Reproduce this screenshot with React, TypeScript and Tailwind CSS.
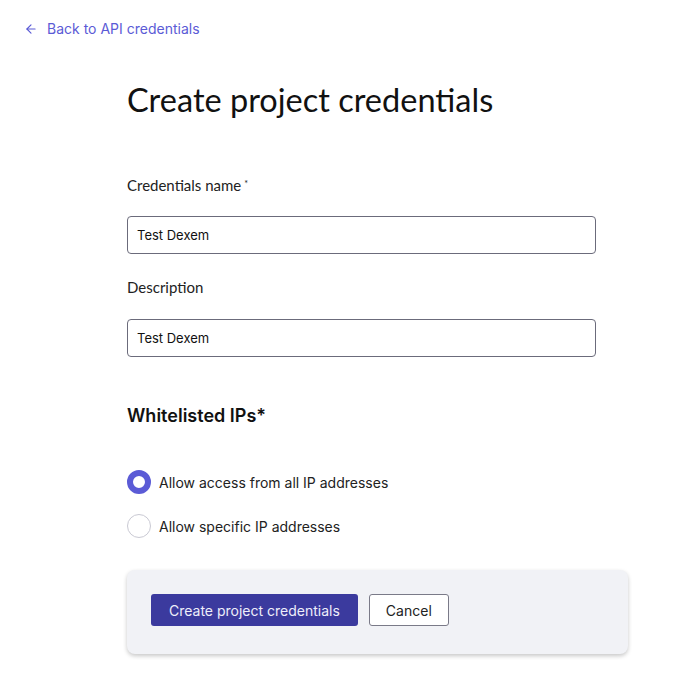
import React, { useState } from "react";

const App = () => {
  const [access, setAccess] = useState("all");

  return (
    <div className="min-h-screen bg-white text-[#111] font-['Inter',sans-serif]">
      <div className="px-6 pt-[19px]">
        <a href="#" className="flex items-center gap-[9px] text-[14px] leading-[20px] text-[#5b5bd6]">
          <svg width="14" height="14" viewBox="0 0 24 24" fill="none" stroke="currentColor" strokeWidth="2" strokeLinecap="round" strokeLinejoin="round">
            <path d="M19 12H5" />
            <path d="M12 19l-7-7 7-7" />
          </svg>
          Back to API credentials
        </a>
      </div>

      <div className="ml-[127px] w-[501px]">
        <h1 className="mt-[41px] text-[32.5px] leading-[40px] font-['Lato',sans-serif] text-[#111]">
          Create project credentials
        </h1>

        <div className="mt-[55px] w-[469px]">
          <label className="block text-[15px] leading-[20px] font-['Lato',sans-serif] text-[#222]">
            Credentials name<sup className="ml-[3px] text-[9px]">*</sup>
          </label>
          <input
            defaultValue="Test Dexem"
            className="mt-[21px] block w-full h-[38px] rounded-[4px] border border-[#6b6b7b] px-[9px] text-[13px] text-[#111] outline-none"
          />

          <label className="mt-[23px] block text-[15px] leading-[20px] font-['Lato',sans-serif] text-[#222]">
            Description
          </label>
          <input
            defaultValue="Test Dexem"
            className="mt-[22px] block w-full h-[38px] rounded-[4px] border border-[#6b6b7b] px-[9px] text-[13px] text-[#111] outline-none"
          />

          <h2 className="mt-[46px] text-[18px] leading-[26px] font-semibold text-[#111]">
            Whitelisted IPs*
          </h2>

          <div className="mt-[41px] flex flex-col gap-[20px]">
            {[
              { id: "all", label: "Allow access from all IP addresses" },
              { id: "specific", label: "Allow specific IP addresses" },
            ].map((o) => (
              <label key={o.id} className="flex items-center gap-[8px] cursor-pointer">
                <span
                  onClick={() => setAccess(o.id)}
                  className={
                    access === o.id
                      ? "w-[24px] h-[24px] rounded-full border-[6px] border-[#5b5bd6] bg-white"
                      : "w-[24px] h-[24px] rounded-full border border-[#c9c9d3] bg-white"
                  }
                />
                <span className="text-[14px] text-[#222]">{o.label}</span>
              </label>
            ))}
          </div>
        </div>

        <div className="mt-[32px] h-[84px] rounded-[8px] bg-[#f1f2f6] shadow-[0_2px_4px_rgba(0,0,0,0.22)] flex items-start gap-[11px] px-[24px] pt-[24px]">
          <button className="h-[32px] px-[18px] rounded-[3px] bg-[#3b3a9e] text-[#eeeefa] text-[14px]">
            Create project credentials
          </button>
          <button className="h-[32px] px-[16px] rounded-[3px] border border-[#7a7a88] bg-white text-[14px] text-[#222]">
            Cancel
          </button>
        </div>
      </div>
    </div>
  );
};

export default App;
